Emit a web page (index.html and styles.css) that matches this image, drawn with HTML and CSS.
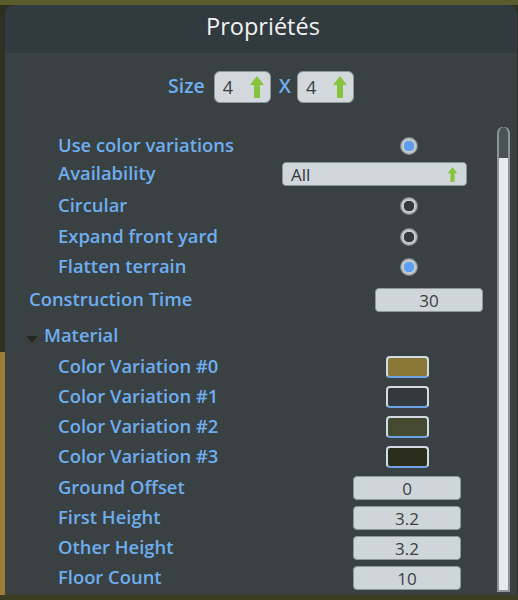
FILE: index.html
```html
<!DOCTYPE html>
<html lang="fr">
<head>
<meta charset="utf-8">
<title>Propriétés</title>
<link rel="stylesheet" href="styles.css">
</head>
<body>
<div class="panel">
  <div class="header">Propriétés</div>
  <div class="body">
    <div class="size-row">
      <span class="lbl size">Size</span>
      <div class="spin"><span class="spin-val">4</span><svg class="arrow" viewBox="0 0 16 24"><path d="M8 1 L15 10 L11 10 L11 23 L5 23 L5 10 L1 10 Z"/></svg></div>
      <span class="lbl x">X</span>
      <div class="spin"><span class="spin-val">4</span><svg class="arrow" viewBox="0 0 16 24"><path d="M8 1 L15 10 L11 10 L11 23 L5 23 L5 10 L1 10 Z"/></svg></div>
    </div>
    <div class="scroll">
      <div class="list">
        <div class="row r1"><span class="lbl ind w-a">Use color variations</span><span class="radio on ml-radio"></span></div>
        <div class="row r2"><span class="lbl ind w-a">Availability</span><div class="drop"><span>All</span><svg class="arrow sm" viewBox="0 0 16 24"><path d="M8 1 L15 10 L11 10 L11 23 L5 23 L5 10 L1 10 Z"/></svg></div></div>
        <div class="row r3"><span class="lbl ind w-a">Circular</span><span class="radio ml-radio"></span></div>
        <div class="row r4"><span class="lbl ind w-a">Expand front yard</span><span class="radio ml-radio"></span></div>
        <div class="row r5"><span class="lbl ind w-a">Flatten terrain</span><span class="radio on ml-radio"></span></div>
        <div class="row r6"><span class="lbl top w-ct">Construction Time</span><div class="field f-ct">30</div></div>
        <div class="row r7"><span class="tri"></span><span class="lbl">Material</span></div>
        <div class="row r8"><span class="lbl ind w-sw">Color Variation #0</span><span class="swatch c0"></span></div>
        <div class="row"><span class="lbl ind w-sw">Color Variation #1</span><span class="swatch c1"></span></div>
        <div class="row"><span class="lbl ind w-sw">Color Variation #2</span><span class="swatch c2"></span></div>
        <div class="row"><span class="lbl ind w-sw">Color Variation #3</span><span class="swatch c3"></span></div>
        <div class="row r12"><span class="lbl ind w-in">Ground Offset</span><div class="field">0</div></div>
        <div class="row"><span class="lbl ind w-in">First Height</span><div class="field">3.2</div></div>
        <div class="row"><span class="lbl ind w-in">Other Height</span><div class="field">3.2</div></div>
        <div class="row"><span class="lbl ind w-in">Floor Count</span><div class="field">10</div></div>
      </div>
      <div class="scrollbar"><div class="thumb"></div></div>
    </div>
  </div>
</div>
</body>
</html>
```
FILE: styles.css
```css
html, body {
  margin: 0;
  padding: 0;
}
body {
  width: 518px;
  height: 600px;
  overflow: hidden;
  font-family: "Open Sans", "Noto Sans", sans-serif;
  background:
    linear-gradient(#5c5b2b 0 5px, transparent 5px),
    linear-gradient(to bottom, transparent 595px, #3b3c22 595px),
    linear-gradient(to bottom, transparent 352px, #9c7d33 352px, #9c7d33 595px, transparent 595px) 0 0 / 5px 100% no-repeat,
    #2d3022;
  padding: 5px 1px 5px 5px;
  box-sizing: border-box;
}
.panel {
  height: 590px;
  border-radius: 9px 9px 0 0;
  background: #394142;
  overflow: hidden;
  display: flex;
  flex-direction: column;
}
.header {
  height: 48px;
  background: #313a3e;
  color: #f2f2f2;
  font-size: 23.5px;
  display: flex;
  align-items: center;
  justify-content: center;
  padding: 0 0 6px 4px;
  box-sizing: border-box;
}
.body {
  flex: 1;
  display: flex;
  flex-direction: column;
  padding-top: 18px;
  min-height: 0;
}
.lbl {
  color: #6eaef0;
  font-weight: 600;
  font-size: 18.4px;
  white-space: nowrap;
  padding-bottom: 3px;
}
.size-row {
  display: flex;
  align-items: center;
  height: 32px;
  padding-left: 163px;
}
.size-row .lbl { font-size: 19.5px; }
.size-row .size { margin-right: 9px; }
.size-row .x { margin: 0 6px 0 8px; }
.spin {
  width: 57px;
  height: 32px;
  box-sizing: border-box;
  background: #d2d8db;
  border: 1px solid #8e989c;
  border-radius: 6px;
  display: flex;
  align-items: center;
  padding-left: 8px;
}
.spin-val {
  color: #3a3f42;
  font-size: 18px;
  width: 26px;
}
.arrow {
  width: 16px;
  height: 24px;
  fill: #86c440;
}
.arrow.sm {
  width: 11px;
  height: 17px;
}
.scroll {
  flex: 1;
  min-height: 0;
  margin-top: 23px;
  display: flex;
  padding-right: 7px;
}
.list {
  flex: 1;
  padding-top: 5px;
}
.row {
  height: 30px;
  display: flex;
  align-items: center;
}
.r2 { margin-top: -2px; }
.r3 { margin-top: 2px; }
.r4 { margin-top: 1px; }
.r6 { margin-top: 3px; }
.r7 { margin-top: 6px; }
.r8 { margin-top: 1px; }
.r12 { margin-top: 1px; }
.ind { padding-left: 53px; box-sizing: border-box; }
.top { padding-left: 24px; box-sizing: border-box; }
.w-a { flex: 0 0 277px; }
.w-ct { flex: 0 0 370px; }
.w-sw { flex: 0 0 381px; }
.w-in { flex: 0 0 348px; }
.ml-radio { margin-left: 118px; }
.radio {
  width: 18px;
  height: 18px;
  border-radius: 50%;
  box-sizing: border-box;
  border: 1px solid #7d8588;
  background: radial-gradient(circle, #343b3d 0 5px, #c9cfd1 5.5px, #a8b0b3 9px);
}
.radio.on {
  background: radial-gradient(circle, #5c9ff0 0 5px, #c9cfd1 5.5px, #a8b0b3 9px);
}
.drop {
  width: 185px;
  height: 24px;
  box-sizing: border-box;
  background: #d0d7da;
  border: 1px solid #8a9498;
  border-radius: 4px;
  display: flex;
  align-items: center;
  justify-content: space-between;
  padding: 0 8px 0 8px;
  color: #33383b;
  font-size: 17px;
}
.field {
  width: 108px;
  height: 24px;
  box-sizing: border-box;
  background: #cfd6d9;
  border: 1px solid #8f999d;
  border-radius: 4px;
  color: #3a3f42;
  font-size: 17px;
  display: flex;
  align-items: center;
  justify-content: center;
}
.tri {
  width: 0;
  height: 0;
  border-left: 6px solid transparent;
  border-right: 6px solid transparent;
  border-top: 7px solid #242a22;
  margin: 6px 6px 0 21px;
}
.swatch {
  width: 43px;
  height: 22px;
  box-sizing: border-box;
  border: 2px solid #d4dae4;
  border-bottom-color: #6ea2e6;
  border-radius: 4px;
}
.c0 { background: #8a7838; }
.c1 { background: #323a40; }
.c2 { background: #45492f; }
.c3 { background: #2b2d1d; }
.scrollbar {
  width: 13px;
  margin-top: 1px;
  margin-bottom: 3px;
  box-sizing: border-box;
  border: 2px solid #8c9599;
  border-top: none;
  background: #e7ebed;
  border-radius: 6px 6px 0 0;
  overflow: hidden;
}
.thumb {
  height: 31px;
  background: #4b5356;
  border-radius: 6px 6px 0 0;
}
```
